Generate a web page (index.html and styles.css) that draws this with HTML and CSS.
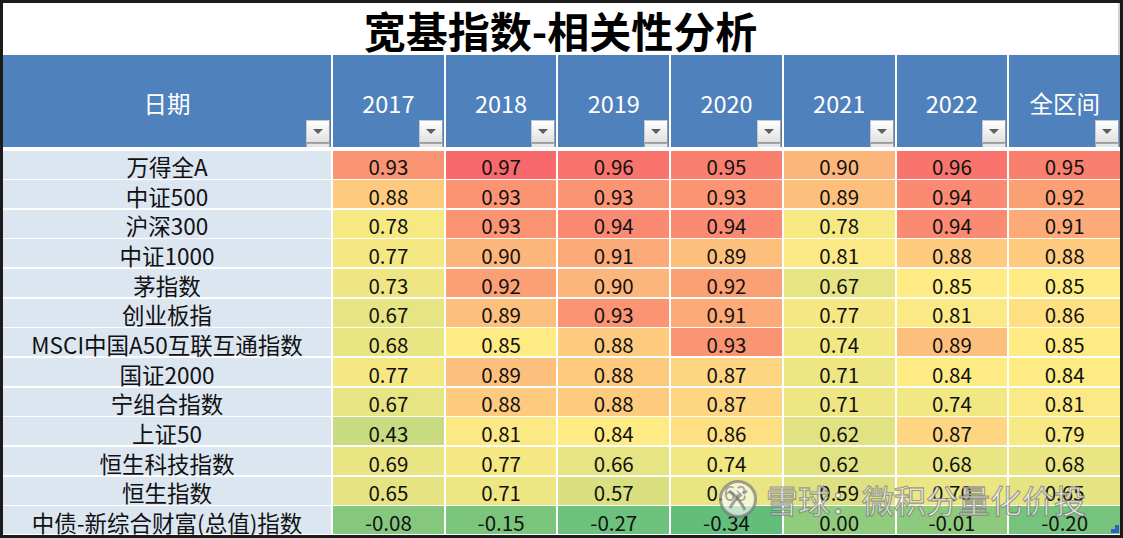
FILE: index.html
```html
<!DOCTYPE html>
<html lang="zh-CN">
<head>
<meta charset="utf-8">
<title>宽基指数-相关性分析</title>
<link rel="stylesheet" href="styles.css">
</head>
<body>
<div class="sheet">
  <div class="title">宽基指数-相关性分析</div>
  <div class="head">
    <div class="hc">日期<span class="fb"></span></div>
    <div class="hc">2017<span class="fb"></span></div>
    <div class="hc">2018<span class="fb"></span></div>
    <div class="hc">2019<span class="fb"></span></div>
    <div class="hc">2020<span class="fb"></span></div>
    <div class="hc">2021<span class="fb"></span></div>
    <div class="hc">2022<span class="fb"></span></div>
    <div class="hc">全区间<span class="fb"></span></div>
  </div>
  <div class="body">
    <div class="lab">万得全A</div><div class="v">0.93</div><div class="v">0.97</div><div class="v">0.96</div><div class="v">0.95</div><div class="v">0.90</div><div class="v">0.96</div><div class="v">0.95</div>
    <div class="lab">中证500</div><div class="v">0.88</div><div class="v">0.93</div><div class="v">0.93</div><div class="v">0.93</div><div class="v">0.89</div><div class="v">0.94</div><div class="v">0.92</div>
    <div class="lab">沪深300</div><div class="v">0.78</div><div class="v">0.93</div><div class="v">0.94</div><div class="v">0.94</div><div class="v">0.78</div><div class="v">0.94</div><div class="v">0.91</div>
    <div class="lab">中证1000</div><div class="v">0.77</div><div class="v">0.90</div><div class="v">0.91</div><div class="v">0.89</div><div class="v">0.81</div><div class="v">0.88</div><div class="v">0.88</div>
    <div class="lab">茅指数</div><div class="v">0.73</div><div class="v">0.92</div><div class="v">0.90</div><div class="v">0.92</div><div class="v">0.67</div><div class="v">0.85</div><div class="v">0.85</div>
    <div class="lab">创业板指</div><div class="v">0.67</div><div class="v">0.89</div><div class="v">0.93</div><div class="v">0.91</div><div class="v">0.77</div><div class="v">0.81</div><div class="v">0.86</div>
    <div class="lab">MSCI中国A50互联互通指数</div><div class="v">0.68</div><div class="v">0.85</div><div class="v">0.88</div><div class="v">0.93</div><div class="v">0.74</div><div class="v">0.89</div><div class="v">0.85</div>
    <div class="lab">国证2000</div><div class="v">0.77</div><div class="v">0.89</div><div class="v">0.88</div><div class="v">0.87</div><div class="v">0.71</div><div class="v">0.84</div><div class="v">0.84</div>
    <div class="lab">宁组合指数</div><div class="v">0.67</div><div class="v">0.88</div><div class="v">0.88</div><div class="v">0.87</div><div class="v">0.71</div><div class="v">0.74</div><div class="v">0.81</div>
    <div class="lab">上证50</div><div class="v">0.43</div><div class="v">0.81</div><div class="v">0.84</div><div class="v">0.86</div><div class="v">0.62</div><div class="v">0.87</div><div class="v">0.79</div>
    <div class="lab">恒生科技指数</div><div class="v">0.69</div><div class="v">0.77</div><div class="v">0.66</div><div class="v">0.74</div><div class="v">0.62</div><div class="v">0.68</div><div class="v">0.68</div>
    <div class="lab">恒生指数</div><div class="v">0.65</div><div class="v">0.71</div><div class="v">0.57</div><div class="v">0.68</div><div class="v">0.59</div><div class="v">0.70</div><div class="v">0.65</div>
    <div class="lab">中债-新综合财富(总值)指数</div><div class="v">-0.08</div><div class="v">-0.15</div><div class="v">-0.27</div><div class="v">-0.34</div><div class="v">0.00</div><div class="v">-0.01</div><div class="v">-0.20</div>
  </div>
  <div class="wm">
    <svg class="wm-logo" width="40" height="40" viewBox="0 0 40 40">
      <circle cx="20" cy="20" r="17.5" fill="rgba(255,255,255,0.6)" stroke="rgba(115,115,115,0.65)" stroke-width="3"/>
      <path d="M11 12 C17 16 23 23 27 31" fill="none" stroke="rgba(115,115,115,0.65)" stroke-width="3"/>
      <path d="M29 12 C23 15 16 21 12 29" fill="none" stroke="rgba(115,115,115,0.65)" stroke-width="3"/>
      <path d="M18 9 C22 12 24 14 26 17" fill="none" stroke="rgba(255,255,255,0.85)" stroke-width="2"/>
    </svg>
    <span class="wm-text">雪球：微积分量化价投</span>
  </div>
  <svg class="corner" width="8" height="8" viewBox="0 0 8 8"><polygon points="4,0 8,0 8,8 0,8 0,4 4,4" fill="#3b5cc4"/></svg>
</div>
<script src="script.js"></script>
</body>
</html>
```

FILE: styles.css
```css
html, body {
  margin: 0;
  padding: 0;
  background: #ffffff;
}

.sheet {
  width: 1123px;
  height: 538px;
  box-sizing: border-box;
  border: 3px solid #1b1b1b;
  position: relative;
  overflow: hidden;
  display: flex;
  flex-direction: column;
  background: #ffffff;
  font-family: "Noto Sans CJK SC", "Noto Sans", sans-serif;
  color: #111111;
}

.title {
  height: 52px;
  flex: none;
  box-sizing: border-box;
  display: flex;
  align-items: center;
  justify-content: center;
  font-size: 42px;
  font-weight: 700;
  color: #000000;
  border-right: 2px solid #d2d2d2;
  line-height: 50px;
  padding-top: 1px;
}

.head {
  flex: none;
  height: 92px;
  display: grid;
  grid-template-columns: 328px repeat(7, 1fr);
  column-gap: 2px;
}

.hc {
  position: relative;
  background: #4f81bd;
  color: #ffffff;
  font-size: 23.5px;
  display: flex;
  align-items: center;
  justify-content: center;
  padding-top: 3px;
  box-sizing: border-box;
}

.fb {
  position: absolute;
  right: 1px;
  bottom: 4px;
  width: 24px;
  height: 23px;
  box-sizing: border-box;
  background: linear-gradient(#fefefe, #e2e2e2);
  border: 1px solid #c8c8c8;
  border-right-color: #9a9a9a;
  border-bottom-color: #9a9a9a;
}

.fb::before {
  content: "";
  position: absolute;
  left: 50%;
  top: 8px;
  margin-left: -5px;
  border-left: 5px solid transparent;
  border-right: 5px solid transparent;
  border-top: 5px solid #5e5e5e;
}

.fb::after {
  content: "";
  position: absolute;
  left: -1px;
  right: -1px;
  top: calc(100% + 1px);
  height: 4px;
  box-sizing: border-box;
  background: #e6e6e6;
  border: 1px solid #a8a8a8;
  border-bottom: none;
}

.body {
  margin-top: 3.5px;
  display: grid;
  grid-template-columns: 328px repeat(7, 1fr);
  column-gap: 2px;
  row-gap: 1.67px;
  grid-auto-rows: 28px;
}

.lab {
  background: #dce6f1;
  font-size: 22.5px;
  display: flex;
  align-items: center;
  justify-content: center;
  padding-top: 3px;
  box-sizing: border-box;
  white-space: nowrap;
}

.v {
  font-size: 20.5px;
  display: flex;
  align-items: center;
  justify-content: center;
  padding-top: 3px;
  box-sizing: border-box;
  background: #ffeb84;
}

.wm {
  position: absolute;
  left: 715px;
  top: 476px;
  display: flex;
  align-items: center;
  gap: 8px;
  pointer-events: none;
}

.wm-text {
  font-size: 32px;
  line-height: 1;
  color: rgba(255, 255, 255, 0.82);
  -webkit-text-stroke: 1.3px rgba(105, 105, 105, 0.6);
  white-space: nowrap;
}

.corner {
  position: absolute;
  left: 1108px;
  top: 522px;
}
```

FILE: script.js
```js
(function () {
  var MIN = -0.34, MID = 0.85, MAX = 0.97;
  var RED = [248, 105, 107], YEL = [255, 235, 132], GRN = [99, 190, 123];
  function mix(a, b, t) {
    return [0, 1, 2].map(function (i) { return Math.round(a[i] + (b[i] - a[i]) * t); });
  }
  var cells = document.querySelectorAll('.v');
  for (var i = 0; i < cells.length; i++) {
    var v = parseFloat(cells[i].textContent);
    var c;
    if (v >= MID) c = mix(YEL, RED, (v - MID) / (MAX - MID));
    else c = mix(YEL, GRN, (MID - v) / (MID - MIN));
    cells[i].style.backgroundColor = 'rgb(' + c.join(',') + ')';
  }
})();
```
